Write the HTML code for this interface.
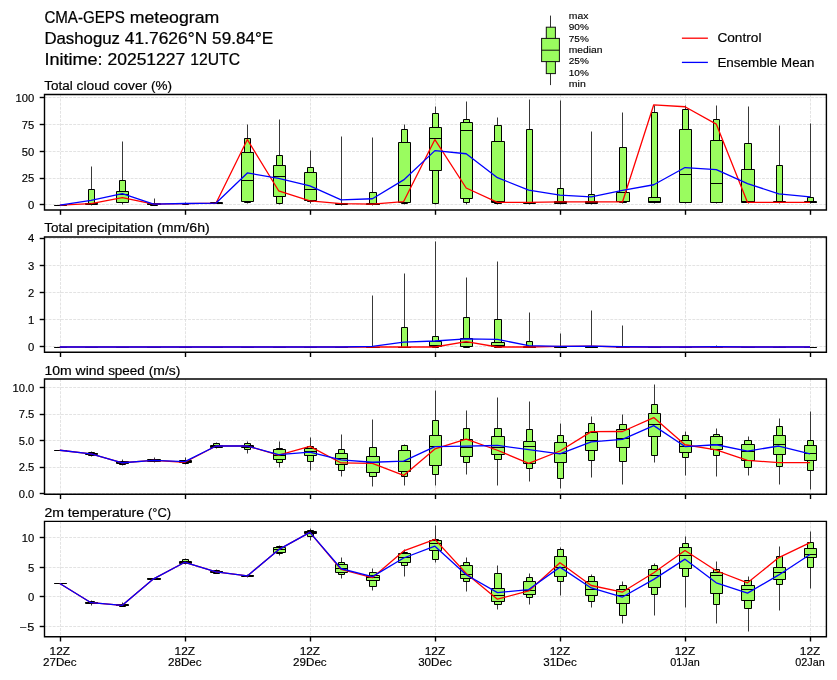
<!DOCTYPE html><html><head><meta charset="utf-8"><style>html,body{margin:0;padding:0;background:#fff;}svg{display:block;will-change:transform;}</style></head><body>
<svg width="837" height="680" viewBox="0 0 837 680" font-family='"Liberation Sans", sans-serif'>
<rect width="837" height="680" fill="#fff"/>
<text x="44.40" y="22.80" font-size="15.76" textLength="80.54" lengthAdjust="spacingAndGlyphs" fill="#000" stroke="#000" stroke-width="0.230">CMA-GEPS</text><text x="129.82" y="22.80" font-size="15.76" textLength="89.39" lengthAdjust="spacingAndGlyphs" fill="#000" stroke="#000" stroke-width="0.230">meteogram</text>
<text x="44.40" y="43.80" font-size="15.76" textLength="75.63" lengthAdjust="spacingAndGlyphs" fill="#000" stroke="#000" stroke-width="0.230">Dashoguz</text><text x="124.89" y="43.80" font-size="15.76" textLength="82.34" lengthAdjust="spacingAndGlyphs" fill="#000" stroke="#000" stroke-width="0.230">41.7626°N</text><text x="212.12" y="43.80" font-size="15.76" textLength="61.11" lengthAdjust="spacingAndGlyphs" fill="#000" stroke="#000" stroke-width="0.230">59.84°E</text>
<text x="44.40" y="64.70" font-size="15.76" textLength="58.19" lengthAdjust="spacingAndGlyphs" fill="#000" stroke="#000" stroke-width="0.230">Initime:</text><text x="107.45" y="64.70" font-size="15.76" textLength="77.87" lengthAdjust="spacingAndGlyphs" fill="#000" stroke="#000" stroke-width="0.230">20251227</text><text x="190.19" y="64.70" font-size="15.76" textLength="49.80" lengthAdjust="spacingAndGlyphs" fill="#000" stroke="#000" stroke-width="0.230">12UTC</text>
<line x1="550.5" y1="15.6" x2="550.5" y2="85.1" stroke="#333" stroke-width="1"/>
<rect x="546.3" y="27.2" width="9.1" height="46.4" fill="#9afc5f" stroke="#111" stroke-width="1"/>
<rect x="541.6" y="38.4" width="17.8" height="23.2" fill="#9afc5f" stroke="#111" stroke-width="1"/>
<line x1="541.6" y1="50.2" x2="559.4" y2="50.2" stroke="#111" stroke-width="1"/>
<text x="568.80" y="18.60" font-size="9.27" textLength="19.61" lengthAdjust="spacingAndGlyphs" fill="#000" stroke="#000" stroke-width="0.135">max</text>
<text x="568.80" y="30.20" font-size="9.27" textLength="19.99" lengthAdjust="spacingAndGlyphs" fill="#000" stroke="#000" stroke-width="0.135">90%</text>
<text x="568.80" y="41.70" font-size="9.27" textLength="19.99" lengthAdjust="spacingAndGlyphs" fill="#000" stroke="#000" stroke-width="0.135">75%</text>
<text x="568.80" y="53.00" font-size="9.27" textLength="33.73" lengthAdjust="spacingAndGlyphs" fill="#000" stroke="#000" stroke-width="0.135">median</text>
<text x="568.80" y="64.00" font-size="9.27" textLength="19.99" lengthAdjust="spacingAndGlyphs" fill="#000" stroke="#000" stroke-width="0.135">25%</text>
<text x="568.80" y="75.50" font-size="9.27" textLength="19.99" lengthAdjust="spacingAndGlyphs" fill="#000" stroke="#000" stroke-width="0.135">10%</text>
<text x="568.80" y="86.80" font-size="9.27" textLength="16.95" lengthAdjust="spacingAndGlyphs" fill="#000" stroke="#000" stroke-width="0.135">min</text>
<line x1="681.9" y1="38.2" x2="707.9" y2="38.2" stroke="#ff0000" stroke-width="1.3"/>
<line x1="681.9" y1="62.4" x2="707.9" y2="62.4" stroke="#0000ff" stroke-width="1.3"/>
<text x="717.40" y="42.40" font-size="12.57" textLength="44.09" lengthAdjust="spacingAndGlyphs" fill="#000" stroke="#000" stroke-width="0.183">Control</text>
<text x="717.40" y="66.80" font-size="12.57" textLength="59.83" lengthAdjust="spacingAndGlyphs" fill="#000" stroke="#000" stroke-width="0.183">Ensemble</text><text x="781.11" y="66.80" font-size="12.57" textLength="33.23" lengthAdjust="spacingAndGlyphs" fill="#000" stroke="#000" stroke-width="0.183">Mean</text>
<defs><clipPath id="clip0"><rect x="44.5" y="94.5" width="781.9" height="115.5"/></clipPath></defs>
<line x1="60.50" y1="94.5" x2="60.50" y2="210.0" stroke="#dcdcdc" stroke-width="0.8" stroke-dasharray="2.9 1.2"/>
<line x1="185.50" y1="94.5" x2="185.50" y2="210.0" stroke="#dcdcdc" stroke-width="0.8" stroke-dasharray="2.9 1.2"/>
<line x1="310.50" y1="94.5" x2="310.50" y2="210.0" stroke="#dcdcdc" stroke-width="0.8" stroke-dasharray="2.9 1.2"/>
<line x1="435.50" y1="94.5" x2="435.50" y2="210.0" stroke="#dcdcdc" stroke-width="0.8" stroke-dasharray="2.9 1.2"/>
<line x1="560.50" y1="94.5" x2="560.50" y2="210.0" stroke="#dcdcdc" stroke-width="0.8" stroke-dasharray="2.9 1.2"/>
<line x1="685.50" y1="94.5" x2="685.50" y2="210.0" stroke="#dcdcdc" stroke-width="0.8" stroke-dasharray="2.9 1.2"/>
<line x1="810.50" y1="94.5" x2="810.50" y2="210.0" stroke="#dcdcdc" stroke-width="0.8" stroke-dasharray="2.9 1.2"/>
<line x1="44.5" y1="204.50" x2="826.4" y2="204.50" stroke="#dcdcdc" stroke-width="0.8" stroke-dasharray="2.9 1.2"/>
<line x1="44.5" y1="178.50" x2="826.4" y2="178.50" stroke="#dcdcdc" stroke-width="0.8" stroke-dasharray="2.9 1.2"/>
<line x1="44.5" y1="151.50" x2="826.4" y2="151.50" stroke="#dcdcdc" stroke-width="0.8" stroke-dasharray="2.9 1.2"/>
<line x1="44.5" y1="124.50" x2="826.4" y2="124.50" stroke="#dcdcdc" stroke-width="0.8" stroke-dasharray="2.9 1.2"/>
<line x1="44.5" y1="97.50" x2="826.4" y2="97.50" stroke="#dcdcdc" stroke-width="0.8" stroke-dasharray="2.9 1.2"/>
<g clip-path="url(#clip0)">
<path d="M60.5 205.5V205.5" stroke="#383838" stroke-width="1.0"/>
<path d="M57.5 205.5H63.5V205.5H57.5Z" fill="#9afc5f" stroke="#000" stroke-width="1.0"/>
<path d="M54.5 205.5H66.5V205.5H54.5Z" fill="#9afc5f" stroke="#000" stroke-width="1.0"/>
<path d="M54.5 205.5H66.5" stroke="#000" stroke-width="1.0"/>
<path d="M91.5 166.5V205.5" stroke="#383838" stroke-width="1.0"/>
<path d="M88.5 189.5H94.5V204.5H88.5Z" fill="#9afc5f" stroke="#000" stroke-width="1.0"/>
<path d="M85.5 203.5H97.5V204.5H85.5Z" fill="#9afc5f" stroke="#000" stroke-width="1.0"/>
<path d="M85.5 203.5H97.5" stroke="#000" stroke-width="1.0"/>
<path d="M122.5 141.5V204.5" stroke="#383838" stroke-width="1.0"/>
<path d="M119.5 180.5H125.5V202.5H119.5Z" fill="#9afc5f" stroke="#000" stroke-width="1.0"/>
<path d="M116.5 191.5H128.5V202.5H116.5Z" fill="#9afc5f" stroke="#000" stroke-width="1.0"/>
<path d="M116.5 194.5H128.5" stroke="#000" stroke-width="1.0"/>
<path d="M154.5 198.5V205.5" stroke="#383838" stroke-width="1.0"/>
<path d="M150.5 203.5H157.5V205.5H150.5Z" fill="#9afc5f" stroke="#000" stroke-width="1.0"/>
<path d="M147.5 203.5H160.5V204.5H147.5Z" fill="#9afc5f" stroke="#000" stroke-width="1.0"/>
<path d="M147.5 204.5H160.5" stroke="#000" stroke-width="1.0"/>
<path d="M185.5 202.5V204.5" stroke="#383838" stroke-width="1.0"/>
<path d="M182.5 203.5H188.5V204.5H182.5Z" fill="#9afc5f" stroke="#000" stroke-width="1.0"/>
<path d="M179.5 203.5H191.5V203.5H179.5Z" fill="#9afc5f" stroke="#000" stroke-width="1.0"/>
<path d="M179.5 203.5H191.5" stroke="#000" stroke-width="1.0"/>
<path d="M216.5 202.5V203.5" stroke="#383838" stroke-width="1.0"/>
<path d="M213.5 202.5H219.5V203.5H213.5Z" fill="#9afc5f" stroke="#000" stroke-width="1.0"/>
<path d="M210.5 202.5H222.5V203.5H210.5Z" fill="#9afc5f" stroke="#000" stroke-width="1.0"/>
<path d="M210.5 203.5H222.5" stroke="#000" stroke-width="1.0"/>
<path d="M247.5 124.5V203.5" stroke="#383838" stroke-width="1.0"/>
<path d="M244.5 138.5H250.5V202.5H244.5Z" fill="#9afc5f" stroke="#000" stroke-width="1.0"/>
<path d="M241.5 152.5H253.5V201.5H241.5Z" fill="#9afc5f" stroke="#000" stroke-width="1.0"/>
<path d="M241.5 180.5H253.5" stroke="#000" stroke-width="1.0"/>
<path d="M279.5 119.5V204.5" stroke="#383838" stroke-width="1.0"/>
<path d="M276.5 155.5H282.5V203.5H276.5Z" fill="#9afc5f" stroke="#000" stroke-width="1.0"/>
<path d="M273.5 165.5H285.5V196.5H273.5Z" fill="#9afc5f" stroke="#000" stroke-width="1.0"/>
<path d="M273.5 176.5H285.5" stroke="#000" stroke-width="1.0"/>
<path d="M310.5 150.5V203.5" stroke="#383838" stroke-width="1.0"/>
<path d="M307.5 167.5H313.5V201.5H307.5Z" fill="#9afc5f" stroke="#000" stroke-width="1.0"/>
<path d="M304.5 172.5H316.5V200.5H304.5Z" fill="#9afc5f" stroke="#000" stroke-width="1.0"/>
<path d="M304.5 189.5H316.5" stroke="#000" stroke-width="1.0"/>
<path d="M341.5 136.5V205.5" stroke="#383838" stroke-width="1.0"/>
<path d="M338.5 203.5H344.5V204.5H338.5Z" fill="#9afc5f" stroke="#000" stroke-width="1.0"/>
<path d="M335.5 203.5H347.5V204.5H335.5Z" fill="#9afc5f" stroke="#000" stroke-width="1.0"/>
<path d="M335.5 203.5H347.5" stroke="#000" stroke-width="1.0"/>
<path d="M372.5 137.5V205.5" stroke="#383838" stroke-width="1.0"/>
<path d="M369.5 192.5H376.5V204.5H369.5Z" fill="#9afc5f" stroke="#000" stroke-width="1.0"/>
<path d="M366.5 203.5H379.5V204.5H366.5Z" fill="#9afc5f" stroke="#000" stroke-width="1.0"/>
<path d="M366.5 204.5H379.5" stroke="#000" stroke-width="1.0"/>
<path d="M404.5 124.5V204.5" stroke="#383838" stroke-width="1.0"/>
<path d="M401.5 129.5H407.5V203.5H401.5Z" fill="#9afc5f" stroke="#000" stroke-width="1.0"/>
<path d="M398.5 142.5H410.5V202.5H398.5Z" fill="#9afc5f" stroke="#000" stroke-width="1.0"/>
<path d="M398.5 185.5H410.5" stroke="#000" stroke-width="1.0"/>
<path d="M435.5 106.5V204.5" stroke="#383838" stroke-width="1.0"/>
<path d="M432.5 113.5H438.5V203.5H432.5Z" fill="#9afc5f" stroke="#000" stroke-width="1.0"/>
<path d="M429.5 127.5H441.5V170.5H429.5Z" fill="#9afc5f" stroke="#000" stroke-width="1.0"/>
<path d="M429.5 138.5H441.5" stroke="#000" stroke-width="1.0"/>
<path d="M466.5 101.5V204.5" stroke="#383838" stroke-width="1.0"/>
<path d="M463.5 119.5H469.5V202.5H463.5Z" fill="#9afc5f" stroke="#000" stroke-width="1.0"/>
<path d="M460.5 122.5H472.5V198.5H460.5Z" fill="#9afc5f" stroke="#000" stroke-width="1.0"/>
<path d="M460.5 130.5H472.5" stroke="#000" stroke-width="1.0"/>
<path d="M497.5 117.5V204.5" stroke="#383838" stroke-width="1.0"/>
<path d="M494.5 125.5H501.5V203.5H494.5Z" fill="#9afc5f" stroke="#000" stroke-width="1.0"/>
<path d="M491.5 141.5H504.5V202.5H491.5Z" fill="#9afc5f" stroke="#000" stroke-width="1.0"/>
<path d="M491.5 201.5H504.5" stroke="#000" stroke-width="1.0"/>
<path d="M529.5 99.5V204.5" stroke="#383838" stroke-width="1.0"/>
<path d="M526.5 129.5H532.5V203.5H526.5Z" fill="#9afc5f" stroke="#000" stroke-width="1.0"/>
<path d="M523.5 202.5H535.5V203.5H523.5Z" fill="#9afc5f" stroke="#000" stroke-width="1.0"/>
<path d="M523.5 202.5H535.5" stroke="#000" stroke-width="1.0"/>
<path d="M560.5 100.5V204.5" stroke="#383838" stroke-width="1.0"/>
<path d="M557.5 188.5H563.5V203.5H557.5Z" fill="#9afc5f" stroke="#000" stroke-width="1.0"/>
<path d="M554.5 201.5H566.5V203.5H554.5Z" fill="#9afc5f" stroke="#000" stroke-width="1.0"/>
<path d="M554.5 202.5H566.5" stroke="#000" stroke-width="1.0"/>
<path d="M591.5 131.5V204.5" stroke="#383838" stroke-width="1.0"/>
<path d="M588.5 194.5H594.5V203.5H588.5Z" fill="#9afc5f" stroke="#000" stroke-width="1.0"/>
<path d="M585.5 201.5H597.5V203.5H585.5Z" fill="#9afc5f" stroke="#000" stroke-width="1.0"/>
<path d="M585.5 202.5H597.5" stroke="#000" stroke-width="1.0"/>
<path d="M622.5 112.5V203.5" stroke="#383838" stroke-width="1.0"/>
<path d="M619.5 147.5H626.5V202.5H619.5Z" fill="#9afc5f" stroke="#000" stroke-width="1.0"/>
<path d="M616.5 192.5H629.5V201.5H616.5Z" fill="#9afc5f" stroke="#000" stroke-width="1.0"/>
<path d="M616.5 201.5H629.5" stroke="#000" stroke-width="1.0"/>
<path d="M654.5 105.5V203.5" stroke="#383838" stroke-width="1.0"/>
<path d="M651.5 112.5H657.5V202.5H651.5Z" fill="#9afc5f" stroke="#000" stroke-width="1.0"/>
<path d="M648.5 197.5H660.5V202.5H648.5Z" fill="#9afc5f" stroke="#000" stroke-width="1.0"/>
<path d="M648.5 201.5H660.5" stroke="#000" stroke-width="1.0"/>
<path d="M685.5 105.5V203.5" stroke="#383838" stroke-width="1.0"/>
<path d="M682.5 109.5H688.5V202.5H682.5Z" fill="#9afc5f" stroke="#000" stroke-width="1.0"/>
<path d="M679.5 129.5H691.5V202.5H679.5Z" fill="#9afc5f" stroke="#000" stroke-width="1.0"/>
<path d="M679.5 174.5H691.5" stroke="#000" stroke-width="1.0"/>
<path d="M716.5 105.5V203.5" stroke="#383838" stroke-width="1.0"/>
<path d="M713.5 119.5H719.5V202.5H713.5Z" fill="#9afc5f" stroke="#000" stroke-width="1.0"/>
<path d="M710.5 140.5H722.5V202.5H710.5Z" fill="#9afc5f" stroke="#000" stroke-width="1.0"/>
<path d="M710.5 183.5H722.5" stroke="#000" stroke-width="1.0"/>
<path d="M748.5 106.5V203.5" stroke="#383838" stroke-width="1.0"/>
<path d="M744.5 143.5H751.5V202.5H744.5Z" fill="#9afc5f" stroke="#000" stroke-width="1.0"/>
<path d="M741.5 169.5H754.5V202.5H741.5Z" fill="#9afc5f" stroke="#000" stroke-width="1.0"/>
<path d="M741.5 201.5H754.5" stroke="#000" stroke-width="1.0"/>
<path d="M779.5 125.5V203.5" stroke="#383838" stroke-width="1.0"/>
<path d="M776.5 165.5H782.5V202.5H776.5Z" fill="#9afc5f" stroke="#000" stroke-width="1.0"/>
<path d="M773.5 201.5H785.5V202.5H773.5Z" fill="#9afc5f" stroke="#000" stroke-width="1.0"/>
<path d="M773.5 202.5H785.5" stroke="#000" stroke-width="1.0"/>
<path d="M810.5 123.5V203.5" stroke="#383838" stroke-width="1.0"/>
<path d="M807.5 197.5H813.5V202.5H807.5Z" fill="#9afc5f" stroke="#000" stroke-width="1.0"/>
<path d="M804.5 201.5H816.5V202.5H804.5Z" fill="#9afc5f" stroke="#000" stroke-width="1.0"/>
<path d="M804.5 202.5H816.5" stroke="#000" stroke-width="1.0"/>
<polyline points="59.80,205.20 91.06,203.59 122.32,197.67 153.58,204.12 184.84,203.59 216.10,203.05 247.36,139.56 278.62,190.78 309.88,200.90 341.14,203.59 372.40,204.12 403.66,201.54 434.92,139.56 466.18,187.98 497.44,202.29 528.70,202.29 559.96,201.97 591.22,201.97 622.48,201.97 653.74,104.81 685.00,106.75 716.26,124.07 747.52,202.40 778.78,202.40 810.04,202.40" fill="none" stroke="#ff0000" stroke-width="1.3" stroke-linejoin="round"/>
<polyline points="59.80,205.20 91.06,200.36 122.32,193.58 153.58,204.12 184.84,203.48 216.10,203.05 247.36,172.92 278.62,178.30 309.88,185.83 341.14,199.82 372.40,198.74 403.66,179.91 434.92,150.65 466.18,153.77 497.44,177.65 528.70,190.14 559.96,195.09 591.22,196.81 622.48,190.35 653.74,184.76 685.00,167.54 716.26,169.69 747.52,183.68 778.78,193.79 810.04,196.81" fill="none" stroke="#0000ff" stroke-width="1.3" stroke-linejoin="round"/>
</g>
<path d="M44.5 94.5H826.4V210.0H44.5Z" fill="none" stroke="#000" stroke-width="1.4"/>
<path d="M39.7 204.5H44.5" stroke="#000" stroke-width="1.4"/>
<text x="28.06" y="208.90" font-size="10.09" textLength="6.26" lengthAdjust="spacingAndGlyphs" fill="#000" stroke="#000" stroke-width="0.147">0</text>
<path d="M39.7 178.5H44.5" stroke="#000" stroke-width="1.4"/>
<text x="21.83" y="182.20" font-size="10.09" textLength="12.47" lengthAdjust="spacingAndGlyphs" fill="#000" stroke="#000" stroke-width="0.147">25</text>
<path d="M39.7 151.5H44.5" stroke="#000" stroke-width="1.4"/>
<text x="21.83" y="155.50" font-size="10.09" textLength="12.47" lengthAdjust="spacingAndGlyphs" fill="#000" stroke="#000" stroke-width="0.147">50</text>
<path d="M39.7 124.5H44.5" stroke="#000" stroke-width="1.4"/>
<text x="21.83" y="128.80" font-size="10.09" textLength="12.47" lengthAdjust="spacingAndGlyphs" fill="#000" stroke="#000" stroke-width="0.147">75</text>
<path d="M39.7 97.5H44.5" stroke="#000" stroke-width="1.4"/>
<text x="15.59" y="102.10" font-size="10.09" textLength="18.73" lengthAdjust="spacingAndGlyphs" fill="#000" stroke="#000" stroke-width="0.147">100</text>
<path d="M60.5 210.0V214.8" stroke="#000" stroke-width="1.4"/>
<path d="M185.5 210.0V214.8" stroke="#000" stroke-width="1.4"/>
<path d="M310.5 210.0V214.8" stroke="#000" stroke-width="1.4"/>
<path d="M435.5 210.0V214.8" stroke="#000" stroke-width="1.4"/>
<path d="M560.5 210.0V214.8" stroke="#000" stroke-width="1.4"/>
<path d="M685.5 210.0V214.8" stroke="#000" stroke-width="1.4"/>
<path d="M810.5 210.0V214.8" stroke="#000" stroke-width="1.4"/>
<text x="44.34" y="89.80" font-size="12.51" textLength="28.43" lengthAdjust="spacingAndGlyphs" fill="#000" stroke="#000" stroke-width="0.182">Total</text><text x="76.64" y="89.80" font-size="12.51" textLength="32.91" lengthAdjust="spacingAndGlyphs" fill="#000" stroke="#000" stroke-width="0.182">cloud</text><text x="113.40" y="89.80" font-size="12.51" textLength="33.78" lengthAdjust="spacingAndGlyphs" fill="#000" stroke="#000" stroke-width="0.182">cover</text><text x="151.04" y="89.80" font-size="12.51" textLength="21.02" lengthAdjust="spacingAndGlyphs" fill="#000" stroke="#000" stroke-width="0.182">(%)</text>
<defs><clipPath id="clip1"><rect x="44.5" y="236.95" width="781.9" height="115.25"/></clipPath></defs>
<line x1="60.50" y1="236.95" x2="60.50" y2="352.2" stroke="#dcdcdc" stroke-width="0.8" stroke-dasharray="2.9 1.2"/>
<line x1="185.50" y1="236.95" x2="185.50" y2="352.2" stroke="#dcdcdc" stroke-width="0.8" stroke-dasharray="2.9 1.2"/>
<line x1="310.50" y1="236.95" x2="310.50" y2="352.2" stroke="#dcdcdc" stroke-width="0.8" stroke-dasharray="2.9 1.2"/>
<line x1="435.50" y1="236.95" x2="435.50" y2="352.2" stroke="#dcdcdc" stroke-width="0.8" stroke-dasharray="2.9 1.2"/>
<line x1="560.50" y1="236.95" x2="560.50" y2="352.2" stroke="#dcdcdc" stroke-width="0.8" stroke-dasharray="2.9 1.2"/>
<line x1="685.50" y1="236.95" x2="685.50" y2="352.2" stroke="#dcdcdc" stroke-width="0.8" stroke-dasharray="2.9 1.2"/>
<line x1="810.50" y1="236.95" x2="810.50" y2="352.2" stroke="#dcdcdc" stroke-width="0.8" stroke-dasharray="2.9 1.2"/>
<line x1="44.5" y1="346.50" x2="826.4" y2="346.50" stroke="#dcdcdc" stroke-width="0.8" stroke-dasharray="2.9 1.2"/>
<line x1="44.5" y1="319.50" x2="826.4" y2="319.50" stroke="#dcdcdc" stroke-width="0.8" stroke-dasharray="2.9 1.2"/>
<line x1="44.5" y1="292.50" x2="826.4" y2="292.50" stroke="#dcdcdc" stroke-width="0.8" stroke-dasharray="2.9 1.2"/>
<line x1="44.5" y1="265.50" x2="826.4" y2="265.50" stroke="#dcdcdc" stroke-width="0.8" stroke-dasharray="2.9 1.2"/>
<line x1="44.5" y1="238.50" x2="826.4" y2="238.50" stroke="#dcdcdc" stroke-width="0.8" stroke-dasharray="2.9 1.2"/>
<g clip-path="url(#clip1)">
<path d="M60.5 347.5V347.5" stroke="#383838" stroke-width="1.0"/>
<path d="M57.5 347.5H63.5V347.5H57.5Z" fill="#9afc5f" stroke="#000" stroke-width="1.0"/>
<path d="M54.5 347.5H66.5V347.5H54.5Z" fill="#9afc5f" stroke="#000" stroke-width="1.0"/>
<path d="M54.5 347.5H66.5" stroke="#000" stroke-width="1.0"/>
<path d="M91.5 347.5V347.5" stroke="#383838" stroke-width="1.0"/>
<path d="M88.5 347.5H94.5V347.5H88.5Z" fill="#9afc5f" stroke="#000" stroke-width="1.0"/>
<path d="M85.5 347.5H97.5V347.5H85.5Z" fill="#9afc5f" stroke="#000" stroke-width="1.0"/>
<path d="M85.5 347.5H97.5" stroke="#000" stroke-width="1.0"/>
<path d="M122.5 347.5V347.5" stroke="#383838" stroke-width="1.0"/>
<path d="M119.5 347.5H125.5V347.5H119.5Z" fill="#9afc5f" stroke="#000" stroke-width="1.0"/>
<path d="M116.5 347.5H128.5V347.5H116.5Z" fill="#9afc5f" stroke="#000" stroke-width="1.0"/>
<path d="M116.5 347.5H128.5" stroke="#000" stroke-width="1.0"/>
<path d="M154.5 347.5V347.5" stroke="#383838" stroke-width="1.0"/>
<path d="M150.5 347.5H157.5V347.5H150.5Z" fill="#9afc5f" stroke="#000" stroke-width="1.0"/>
<path d="M147.5 347.5H160.5V347.5H147.5Z" fill="#9afc5f" stroke="#000" stroke-width="1.0"/>
<path d="M147.5 347.5H160.5" stroke="#000" stroke-width="1.0"/>
<path d="M185.5 347.5V347.5" stroke="#383838" stroke-width="1.0"/>
<path d="M182.5 347.5H188.5V347.5H182.5Z" fill="#9afc5f" stroke="#000" stroke-width="1.0"/>
<path d="M179.5 347.5H191.5V347.5H179.5Z" fill="#9afc5f" stroke="#000" stroke-width="1.0"/>
<path d="M179.5 347.5H191.5" stroke="#000" stroke-width="1.0"/>
<path d="M216.5 347.5V347.5" stroke="#383838" stroke-width="1.0"/>
<path d="M213.5 347.5H219.5V347.5H213.5Z" fill="#9afc5f" stroke="#000" stroke-width="1.0"/>
<path d="M210.5 347.5H222.5V347.5H210.5Z" fill="#9afc5f" stroke="#000" stroke-width="1.0"/>
<path d="M210.5 347.5H222.5" stroke="#000" stroke-width="1.0"/>
<path d="M247.5 347.5V347.5" stroke="#383838" stroke-width="1.0"/>
<path d="M244.5 347.5H250.5V347.5H244.5Z" fill="#9afc5f" stroke="#000" stroke-width="1.0"/>
<path d="M241.5 347.5H253.5V347.5H241.5Z" fill="#9afc5f" stroke="#000" stroke-width="1.0"/>
<path d="M241.5 347.5H253.5" stroke="#000" stroke-width="1.0"/>
<path d="M279.5 347.5V347.5" stroke="#383838" stroke-width="1.0"/>
<path d="M276.5 347.5H282.5V347.5H276.5Z" fill="#9afc5f" stroke="#000" stroke-width="1.0"/>
<path d="M273.5 347.5H285.5V347.5H273.5Z" fill="#9afc5f" stroke="#000" stroke-width="1.0"/>
<path d="M273.5 347.5H285.5" stroke="#000" stroke-width="1.0"/>
<path d="M310.5 347.5V347.5" stroke="#383838" stroke-width="1.0"/>
<path d="M307.5 347.5H313.5V347.5H307.5Z" fill="#9afc5f" stroke="#000" stroke-width="1.0"/>
<path d="M304.5 347.5H316.5V347.5H304.5Z" fill="#9afc5f" stroke="#000" stroke-width="1.0"/>
<path d="M304.5 347.5H316.5" stroke="#000" stroke-width="1.0"/>
<path d="M341.5 347.5V347.5" stroke="#383838" stroke-width="1.0"/>
<path d="M338.5 347.5H344.5V347.5H338.5Z" fill="#9afc5f" stroke="#000" stroke-width="1.0"/>
<path d="M335.5 347.5H347.5V347.5H335.5Z" fill="#9afc5f" stroke="#000" stroke-width="1.0"/>
<path d="M335.5 347.5H347.5" stroke="#000" stroke-width="1.0"/>
<path d="M372.5 295.5V347.5" stroke="#383838" stroke-width="1.0"/>
<path d="M369.5 347.5H376.5V347.5H369.5Z" fill="#9afc5f" stroke="#000" stroke-width="1.0"/>
<path d="M366.5 347.5H379.5V347.5H366.5Z" fill="#9afc5f" stroke="#000" stroke-width="1.0"/>
<path d="M366.5 347.5H379.5" stroke="#000" stroke-width="1.0"/>
<path d="M404.5 273.5V347.5" stroke="#383838" stroke-width="1.0"/>
<path d="M401.5 327.5H407.5V347.5H401.5Z" fill="#9afc5f" stroke="#000" stroke-width="1.0"/>
<path d="M398.5 347.5H410.5V347.5H398.5Z" fill="#9afc5f" stroke="#000" stroke-width="1.0"/>
<path d="M398.5 347.5H410.5" stroke="#000" stroke-width="1.0"/>
<path d="M435.5 241.5V347.5" stroke="#383838" stroke-width="1.0"/>
<path d="M432.5 336.5H438.5V347.5H432.5Z" fill="#9afc5f" stroke="#000" stroke-width="1.0"/>
<path d="M429.5 341.5H441.5V346.5H429.5Z" fill="#9afc5f" stroke="#000" stroke-width="1.0"/>
<path d="M429.5 345.5H441.5" stroke="#000" stroke-width="1.0"/>
<path d="M466.5 277.5V347.5" stroke="#383838" stroke-width="1.0"/>
<path d="M463.5 317.5H469.5V347.5H463.5Z" fill="#9afc5f" stroke="#000" stroke-width="1.0"/>
<path d="M460.5 338.5H472.5V346.5H460.5Z" fill="#9afc5f" stroke="#000" stroke-width="1.0"/>
<path d="M460.5 342.5H472.5" stroke="#000" stroke-width="1.0"/>
<path d="M497.5 261.5V347.5" stroke="#383838" stroke-width="1.0"/>
<path d="M494.5 319.5H501.5V347.5H494.5Z" fill="#9afc5f" stroke="#000" stroke-width="1.0"/>
<path d="M491.5 342.5H504.5V346.5H491.5Z" fill="#9afc5f" stroke="#000" stroke-width="1.0"/>
<path d="M491.5 345.5H504.5" stroke="#000" stroke-width="1.0"/>
<path d="M529.5 312.5V347.5" stroke="#383838" stroke-width="1.0"/>
<path d="M526.5 341.5H532.5V347.5H526.5Z" fill="#9afc5f" stroke="#000" stroke-width="1.0"/>
<path d="M523.5 346.5H535.5V347.5H523.5Z" fill="#9afc5f" stroke="#000" stroke-width="1.0"/>
<path d="M523.5 347.5H535.5" stroke="#000" stroke-width="1.0"/>
<path d="M560.5 333.5V347.5" stroke="#383838" stroke-width="1.0"/>
<path d="M557.5 346.5H563.5V347.5H557.5Z" fill="#9afc5f" stroke="#000" stroke-width="1.0"/>
<path d="M554.5 347.5H566.5V347.5H554.5Z" fill="#9afc5f" stroke="#000" stroke-width="1.0"/>
<path d="M554.5 347.5H566.5" stroke="#000" stroke-width="1.0"/>
<path d="M591.5 310.5V347.5" stroke="#383838" stroke-width="1.0"/>
<path d="M588.5 347.5H594.5V347.5H588.5Z" fill="#9afc5f" stroke="#000" stroke-width="1.0"/>
<path d="M585.5 347.5H597.5V347.5H585.5Z" fill="#9afc5f" stroke="#000" stroke-width="1.0"/>
<path d="M585.5 347.5H597.5" stroke="#000" stroke-width="1.0"/>
<path d="M622.5 325.5V347.5" stroke="#383838" stroke-width="1.0"/>
<path d="M619.5 347.5H626.5V347.5H619.5Z" fill="#9afc5f" stroke="#000" stroke-width="1.0"/>
<path d="M616.5 347.5H629.5V347.5H616.5Z" fill="#9afc5f" stroke="#000" stroke-width="1.0"/>
<path d="M616.5 347.5H629.5" stroke="#000" stroke-width="1.0"/>
<path d="M654.5 347.5V347.5" stroke="#383838" stroke-width="1.0"/>
<path d="M651.5 347.5H657.5V347.5H651.5Z" fill="#9afc5f" stroke="#000" stroke-width="1.0"/>
<path d="M648.5 347.5H660.5V347.5H648.5Z" fill="#9afc5f" stroke="#000" stroke-width="1.0"/>
<path d="M648.5 347.5H660.5" stroke="#000" stroke-width="1.0"/>
<path d="M685.5 347.5V347.5" stroke="#383838" stroke-width="1.0"/>
<path d="M682.5 347.5H688.5V347.5H682.5Z" fill="#9afc5f" stroke="#000" stroke-width="1.0"/>
<path d="M679.5 347.5H691.5V347.5H679.5Z" fill="#9afc5f" stroke="#000" stroke-width="1.0"/>
<path d="M679.5 347.5H691.5" stroke="#000" stroke-width="1.0"/>
<path d="M716.5 345.5V347.5" stroke="#383838" stroke-width="1.0"/>
<path d="M713.5 347.5H719.5V347.5H713.5Z" fill="#9afc5f" stroke="#000" stroke-width="1.0"/>
<path d="M710.5 347.5H722.5V347.5H710.5Z" fill="#9afc5f" stroke="#000" stroke-width="1.0"/>
<path d="M710.5 347.5H722.5" stroke="#000" stroke-width="1.0"/>
<path d="M748.5 347.5V347.5" stroke="#383838" stroke-width="1.0"/>
<path d="M744.5 347.5H751.5V347.5H744.5Z" fill="#9afc5f" stroke="#000" stroke-width="1.0"/>
<path d="M741.5 347.5H754.5V347.5H741.5Z" fill="#9afc5f" stroke="#000" stroke-width="1.0"/>
<path d="M741.5 347.5H754.5" stroke="#000" stroke-width="1.0"/>
<path d="M779.5 346.5V347.5" stroke="#383838" stroke-width="1.0"/>
<path d="M776.5 347.5H782.5V347.5H776.5Z" fill="#9afc5f" stroke="#000" stroke-width="1.0"/>
<path d="M773.5 347.5H785.5V347.5H773.5Z" fill="#9afc5f" stroke="#000" stroke-width="1.0"/>
<path d="M773.5 347.5H785.5" stroke="#000" stroke-width="1.0"/>
<path d="M810.5 347.5V347.5" stroke="#383838" stroke-width="1.0"/>
<path d="M807.5 347.5H813.5V347.5H807.5Z" fill="#9afc5f" stroke="#000" stroke-width="1.0"/>
<path d="M804.5 347.5H816.5V347.5H804.5Z" fill="#9afc5f" stroke="#000" stroke-width="1.0"/>
<path d="M804.5 347.5H816.5" stroke="#000" stroke-width="1.0"/>
<polyline points="59.80,347.00 91.06,347.00 122.32,347.00 153.58,347.00 184.84,347.00 216.10,347.00 247.36,347.00 278.62,347.00 309.88,347.00 341.14,347.00 372.40,347.00 403.66,347.00 434.92,347.00 466.18,341.56 497.44,347.00 528.70,347.00 559.96,346.46 591.22,346.18 622.48,347.00 653.74,347.00 685.00,347.00 716.26,347.00 747.52,347.00 778.78,347.00 810.04,347.00" fill="none" stroke="#ff0000" stroke-width="1.3" stroke-linejoin="round"/>
<polyline points="59.80,347.00 91.06,347.00 122.32,347.00 153.58,347.00 184.84,347.00 216.10,347.00 247.36,347.00 278.62,347.00 309.88,347.00 341.14,347.00 372.40,346.46 403.66,342.10 434.92,341.02 466.18,338.84 497.44,339.38 528.70,345.64 559.96,346.46 591.22,346.18 622.48,346.73 653.74,347.00 685.00,347.00 716.26,346.73 747.52,347.00 778.78,347.00 810.04,347.00" fill="none" stroke="#0000ff" stroke-width="1.3" stroke-linejoin="round"/>
</g>
<path d="M44.5 236.95H826.4V352.2H44.5Z" fill="none" stroke="#000" stroke-width="1.4"/>
<path d="M39.7 346.5H44.5" stroke="#000" stroke-width="1.4"/>
<text x="28.06" y="351.10" font-size="10.09" textLength="6.26" lengthAdjust="spacingAndGlyphs" fill="#000" stroke="#000" stroke-width="0.147">0</text>
<path d="M39.7 319.5H44.5" stroke="#000" stroke-width="1.4"/>
<text x="28.06" y="323.90" font-size="10.09" textLength="6.26" lengthAdjust="spacingAndGlyphs" fill="#000" stroke="#000" stroke-width="0.147">1</text>
<path d="M39.7 292.5H44.5" stroke="#000" stroke-width="1.4"/>
<text x="28.06" y="296.70" font-size="10.09" textLength="6.26" lengthAdjust="spacingAndGlyphs" fill="#000" stroke="#000" stroke-width="0.147">2</text>
<path d="M39.7 265.5H44.5" stroke="#000" stroke-width="1.4"/>
<text x="28.06" y="269.50" font-size="10.09" textLength="6.26" lengthAdjust="spacingAndGlyphs" fill="#000" stroke="#000" stroke-width="0.147">3</text>
<path d="M39.7 238.5H44.5" stroke="#000" stroke-width="1.4"/>
<text x="28.06" y="242.30" font-size="10.09" textLength="6.26" lengthAdjust="spacingAndGlyphs" fill="#000" stroke="#000" stroke-width="0.147">4</text>
<path d="M60.5 352.2V357.0" stroke="#000" stroke-width="1.4"/>
<path d="M185.5 352.2V357.0" stroke="#000" stroke-width="1.4"/>
<path d="M310.5 352.2V357.0" stroke="#000" stroke-width="1.4"/>
<path d="M435.5 352.2V357.0" stroke="#000" stroke-width="1.4"/>
<path d="M560.5 352.2V357.0" stroke="#000" stroke-width="1.4"/>
<path d="M685.5 352.2V357.0" stroke="#000" stroke-width="1.4"/>
<path d="M810.5 352.2V357.0" stroke="#000" stroke-width="1.4"/>
<text x="44.34" y="231.80" font-size="12.51" textLength="28.43" lengthAdjust="spacingAndGlyphs" fill="#000" stroke="#000" stroke-width="0.182">Total</text><text x="76.64" y="231.80" font-size="12.51" textLength="76.54" lengthAdjust="spacingAndGlyphs" fill="#000" stroke="#000" stroke-width="0.182">precipitation</text><text x="157.05" y="231.80" font-size="12.51" textLength="52.67" lengthAdjust="spacingAndGlyphs" fill="#000" stroke="#000" stroke-width="0.182">(mm/6h)</text>
<defs><clipPath id="clip2"><rect x="44.5" y="378.95" width="781.9" height="115.30000000000001"/></clipPath></defs>
<line x1="60.50" y1="378.95" x2="60.50" y2="494.25" stroke="#dcdcdc" stroke-width="0.8" stroke-dasharray="2.9 1.2"/>
<line x1="185.50" y1="378.95" x2="185.50" y2="494.25" stroke="#dcdcdc" stroke-width="0.8" stroke-dasharray="2.9 1.2"/>
<line x1="310.50" y1="378.95" x2="310.50" y2="494.25" stroke="#dcdcdc" stroke-width="0.8" stroke-dasharray="2.9 1.2"/>
<line x1="435.50" y1="378.95" x2="435.50" y2="494.25" stroke="#dcdcdc" stroke-width="0.8" stroke-dasharray="2.9 1.2"/>
<line x1="560.50" y1="378.95" x2="560.50" y2="494.25" stroke="#dcdcdc" stroke-width="0.8" stroke-dasharray="2.9 1.2"/>
<line x1="685.50" y1="378.95" x2="685.50" y2="494.25" stroke="#dcdcdc" stroke-width="0.8" stroke-dasharray="2.9 1.2"/>
<line x1="810.50" y1="378.95" x2="810.50" y2="494.25" stroke="#dcdcdc" stroke-width="0.8" stroke-dasharray="2.9 1.2"/>
<line x1="44.5" y1="493.50" x2="826.4" y2="493.50" stroke="#dcdcdc" stroke-width="0.8" stroke-dasharray="2.9 1.2"/>
<line x1="44.5" y1="467.50" x2="826.4" y2="467.50" stroke="#dcdcdc" stroke-width="0.8" stroke-dasharray="2.9 1.2"/>
<line x1="44.5" y1="440.50" x2="826.4" y2="440.50" stroke="#dcdcdc" stroke-width="0.8" stroke-dasharray="2.9 1.2"/>
<line x1="44.5" y1="414.50" x2="826.4" y2="414.50" stroke="#dcdcdc" stroke-width="0.8" stroke-dasharray="2.9 1.2"/>
<line x1="44.5" y1="387.50" x2="826.4" y2="387.50" stroke="#dcdcdc" stroke-width="0.8" stroke-dasharray="2.9 1.2"/>
<g clip-path="url(#clip2)">
<path d="M60.5 450.5V450.5" stroke="#383838" stroke-width="1.0"/>
<path d="M57.5 450.5H63.5V450.5H57.5Z" fill="#9afc5f" stroke="#000" stroke-width="1.0"/>
<path d="M54.5 450.5H66.5V450.5H54.5Z" fill="#9afc5f" stroke="#000" stroke-width="1.0"/>
<path d="M54.5 450.5H66.5" stroke="#000" stroke-width="1.0"/>
<path d="M91.5 451.5V456.5" stroke="#383838" stroke-width="1.0"/>
<path d="M88.5 452.5H94.5V455.5H88.5Z" fill="#9afc5f" stroke="#000" stroke-width="1.0"/>
<path d="M85.5 453.5H97.5V454.5H85.5Z" fill="#9afc5f" stroke="#000" stroke-width="1.0"/>
<path d="M85.5 453.5H97.5" stroke="#000" stroke-width="1.0"/>
<path d="M122.5 459.5V465.5" stroke="#383838" stroke-width="1.0"/>
<path d="M119.5 461.5H125.5V464.5H119.5Z" fill="#9afc5f" stroke="#000" stroke-width="1.0"/>
<path d="M116.5 461.5H128.5V463.5H116.5Z" fill="#9afc5f" stroke="#000" stroke-width="1.0"/>
<path d="M116.5 462.5H128.5" stroke="#000" stroke-width="1.0"/>
<path d="M154.5 457.5V462.5" stroke="#383838" stroke-width="1.0"/>
<path d="M150.5 459.5H157.5V461.5H150.5Z" fill="#9afc5f" stroke="#000" stroke-width="1.0"/>
<path d="M147.5 459.5H160.5V461.5H147.5Z" fill="#9afc5f" stroke="#000" stroke-width="1.0"/>
<path d="M147.5 460.5H160.5" stroke="#000" stroke-width="1.0"/>
<path d="M185.5 457.5V464.5" stroke="#383838" stroke-width="1.0"/>
<path d="M182.5 460.5H188.5V463.5H182.5Z" fill="#9afc5f" stroke="#000" stroke-width="1.0"/>
<path d="M179.5 460.5H191.5V462.5H179.5Z" fill="#9afc5f" stroke="#000" stroke-width="1.0"/>
<path d="M179.5 461.5H191.5" stroke="#000" stroke-width="1.0"/>
<path d="M216.5 442.5V448.5" stroke="#383838" stroke-width="1.0"/>
<path d="M213.5 443.5H219.5V447.5H213.5Z" fill="#9afc5f" stroke="#000" stroke-width="1.0"/>
<path d="M210.5 445.5H222.5V447.5H210.5Z" fill="#9afc5f" stroke="#000" stroke-width="1.0"/>
<path d="M210.5 446.5H222.5" stroke="#000" stroke-width="1.0"/>
<path d="M247.5 441.5V453.5" stroke="#383838" stroke-width="1.0"/>
<path d="M244.5 443.5H250.5V449.5H244.5Z" fill="#9afc5f" stroke="#000" stroke-width="1.0"/>
<path d="M241.5 445.5H253.5V447.5H241.5Z" fill="#9afc5f" stroke="#000" stroke-width="1.0"/>
<path d="M241.5 446.5H253.5" stroke="#000" stroke-width="1.0"/>
<path d="M279.5 441.5V467.5" stroke="#383838" stroke-width="1.0"/>
<path d="M276.5 448.5H282.5V462.5H276.5Z" fill="#9afc5f" stroke="#000" stroke-width="1.0"/>
<path d="M273.5 449.5H285.5V459.5H273.5Z" fill="#9afc5f" stroke="#000" stroke-width="1.0"/>
<path d="M273.5 455.5H285.5" stroke="#000" stroke-width="1.0"/>
<path d="M310.5 437.5V470.5" stroke="#383838" stroke-width="1.0"/>
<path d="M307.5 446.5H313.5V461.5H307.5Z" fill="#9afc5f" stroke="#000" stroke-width="1.0"/>
<path d="M304.5 448.5H316.5V455.5H304.5Z" fill="#9afc5f" stroke="#000" stroke-width="1.0"/>
<path d="M304.5 451.5H316.5" stroke="#000" stroke-width="1.0"/>
<path d="M341.5 434.5V476.5" stroke="#383838" stroke-width="1.0"/>
<path d="M338.5 449.5H344.5V470.5H338.5Z" fill="#9afc5f" stroke="#000" stroke-width="1.0"/>
<path d="M335.5 453.5H347.5V464.5H335.5Z" fill="#9afc5f" stroke="#000" stroke-width="1.0"/>
<path d="M335.5 458.5H347.5" stroke="#000" stroke-width="1.0"/>
<path d="M372.5 419.5V486.5" stroke="#383838" stroke-width="1.0"/>
<path d="M369.5 447.5H376.5V476.5H369.5Z" fill="#9afc5f" stroke="#000" stroke-width="1.0"/>
<path d="M366.5 456.5H379.5V472.5H366.5Z" fill="#9afc5f" stroke="#000" stroke-width="1.0"/>
<path d="M366.5 462.5H379.5" stroke="#000" stroke-width="1.0"/>
<path d="M404.5 444.5V485.5" stroke="#383838" stroke-width="1.0"/>
<path d="M401.5 445.5H407.5V476.5H401.5Z" fill="#9afc5f" stroke="#000" stroke-width="1.0"/>
<path d="M398.5 450.5H410.5V471.5H398.5Z" fill="#9afc5f" stroke="#000" stroke-width="1.0"/>
<path d="M398.5 461.5H410.5" stroke="#000" stroke-width="1.0"/>
<path d="M435.5 390.5V485.5" stroke="#383838" stroke-width="1.0"/>
<path d="M432.5 420.5H438.5V474.5H432.5Z" fill="#9afc5f" stroke="#000" stroke-width="1.0"/>
<path d="M429.5 435.5H441.5V465.5H429.5Z" fill="#9afc5f" stroke="#000" stroke-width="1.0"/>
<path d="M429.5 446.5H441.5" stroke="#000" stroke-width="1.0"/>
<path d="M466.5 410.5V474.5" stroke="#383838" stroke-width="1.0"/>
<path d="M463.5 428.5H469.5V462.5H463.5Z" fill="#9afc5f" stroke="#000" stroke-width="1.0"/>
<path d="M460.5 439.5H472.5V456.5H460.5Z" fill="#9afc5f" stroke="#000" stroke-width="1.0"/>
<path d="M460.5 447.5H472.5" stroke="#000" stroke-width="1.0"/>
<path d="M497.5 397.5V485.5" stroke="#383838" stroke-width="1.0"/>
<path d="M494.5 428.5H501.5V459.5H494.5Z" fill="#9afc5f" stroke="#000" stroke-width="1.0"/>
<path d="M491.5 436.5H504.5V454.5H491.5Z" fill="#9afc5f" stroke="#000" stroke-width="1.0"/>
<path d="M491.5 447.5H504.5" stroke="#000" stroke-width="1.0"/>
<path d="M529.5 401.5V481.5" stroke="#383838" stroke-width="1.0"/>
<path d="M526.5 429.5H532.5V468.5H526.5Z" fill="#9afc5f" stroke="#000" stroke-width="1.0"/>
<path d="M523.5 441.5H535.5V463.5H523.5Z" fill="#9afc5f" stroke="#000" stroke-width="1.0"/>
<path d="M523.5 446.5H535.5" stroke="#000" stroke-width="1.0"/>
<path d="M560.5 423.5V488.5" stroke="#383838" stroke-width="1.0"/>
<path d="M557.5 435.5H563.5V478.5H557.5Z" fill="#9afc5f" stroke="#000" stroke-width="1.0"/>
<path d="M554.5 442.5H566.5V462.5H554.5Z" fill="#9afc5f" stroke="#000" stroke-width="1.0"/>
<path d="M554.5 453.5H566.5" stroke="#000" stroke-width="1.0"/>
<path d="M591.5 416.5V477.5" stroke="#383838" stroke-width="1.0"/>
<path d="M588.5 423.5H594.5V460.5H588.5Z" fill="#9afc5f" stroke="#000" stroke-width="1.0"/>
<path d="M585.5 432.5H597.5V450.5H585.5Z" fill="#9afc5f" stroke="#000" stroke-width="1.0"/>
<path d="M585.5 440.5H597.5" stroke="#000" stroke-width="1.0"/>
<path d="M622.5 414.5V484.5" stroke="#383838" stroke-width="1.0"/>
<path d="M619.5 424.5H626.5V461.5H619.5Z" fill="#9afc5f" stroke="#000" stroke-width="1.0"/>
<path d="M616.5 429.5H629.5V447.5H616.5Z" fill="#9afc5f" stroke="#000" stroke-width="1.0"/>
<path d="M616.5 438.5H629.5" stroke="#000" stroke-width="1.0"/>
<path d="M654.5 384.5V462.5" stroke="#383838" stroke-width="1.0"/>
<path d="M651.5 404.5H657.5V455.5H651.5Z" fill="#9afc5f" stroke="#000" stroke-width="1.0"/>
<path d="M648.5 413.5H660.5V436.5H648.5Z" fill="#9afc5f" stroke="#000" stroke-width="1.0"/>
<path d="M648.5 424.5H660.5" stroke="#000" stroke-width="1.0"/>
<path d="M685.5 431.5V475.5" stroke="#383838" stroke-width="1.0"/>
<path d="M682.5 435.5H688.5V457.5H682.5Z" fill="#9afc5f" stroke="#000" stroke-width="1.0"/>
<path d="M679.5 440.5H691.5V452.5H679.5Z" fill="#9afc5f" stroke="#000" stroke-width="1.0"/>
<path d="M679.5 446.5H691.5" stroke="#000" stroke-width="1.0"/>
<path d="M716.5 428.5V476.5" stroke="#383838" stroke-width="1.0"/>
<path d="M713.5 434.5H719.5V455.5H713.5Z" fill="#9afc5f" stroke="#000" stroke-width="1.0"/>
<path d="M710.5 436.5H722.5V449.5H710.5Z" fill="#9afc5f" stroke="#000" stroke-width="1.0"/>
<path d="M710.5 444.5H722.5" stroke="#000" stroke-width="1.0"/>
<path d="M748.5 436.5V475.5" stroke="#383838" stroke-width="1.0"/>
<path d="M744.5 440.5H751.5V467.5H744.5Z" fill="#9afc5f" stroke="#000" stroke-width="1.0"/>
<path d="M741.5 444.5H754.5V460.5H741.5Z" fill="#9afc5f" stroke="#000" stroke-width="1.0"/>
<path d="M741.5 451.5H754.5" stroke="#000" stroke-width="1.0"/>
<path d="M779.5 418.5V484.5" stroke="#383838" stroke-width="1.0"/>
<path d="M776.5 426.5H782.5V466.5H776.5Z" fill="#9afc5f" stroke="#000" stroke-width="1.0"/>
<path d="M773.5 435.5H785.5V454.5H773.5Z" fill="#9afc5f" stroke="#000" stroke-width="1.0"/>
<path d="M773.5 444.5H785.5" stroke="#000" stroke-width="1.0"/>
<path d="M810.5 411.5V489.5" stroke="#383838" stroke-width="1.0"/>
<path d="M807.5 440.5H813.5V470.5H807.5Z" fill="#9afc5f" stroke="#000" stroke-width="1.0"/>
<path d="M804.5 445.5H816.5V460.5H804.5Z" fill="#9afc5f" stroke="#000" stroke-width="1.0"/>
<path d="M804.5 453.5H816.5" stroke="#000" stroke-width="1.0"/>
<polyline points="59.80,450.25 91.06,453.86 122.32,462.76 153.58,460.32 184.84,462.23 216.10,446.01 247.36,446.01 278.62,455.02 309.88,446.33 341.14,462.97 372.40,463.40 403.66,475.48 434.92,448.98 466.18,439.02 497.44,450.25 528.70,463.40 559.96,450.99 591.22,431.60 622.48,431.49 653.74,417.60 685.00,444.74 716.26,449.83 747.52,460.43 778.78,462.55 810.04,462.55" fill="none" stroke="#ff0000" stroke-width="1.3" stroke-linejoin="round"/>
<polyline points="59.80,450.25 91.06,453.86 122.32,462.76 153.58,460.32 184.84,461.70 216.10,446.01 247.36,446.01 278.62,454.60 309.88,452.16 341.14,459.79 372.40,462.23 403.66,461.06 434.92,446.65 466.18,446.22 497.44,445.48 528.70,449.62 559.96,453.86 591.22,441.88 622.48,439.44 653.74,425.66 685.00,446.54 716.26,444.74 747.52,451.10 778.78,446.01 810.04,453.86" fill="none" stroke="#0000ff" stroke-width="1.3" stroke-linejoin="round"/>
</g>
<path d="M44.5 378.95H826.4V494.25H44.5Z" fill="none" stroke="#000" stroke-width="1.4"/>
<path d="M39.7 493.5H44.5" stroke="#000" stroke-width="1.4"/>
<text x="18.71" y="497.80" font-size="10.09" textLength="15.58" lengthAdjust="spacingAndGlyphs" fill="#000" stroke="#000" stroke-width="0.147">0.0</text>
<path d="M39.7 467.5H44.5" stroke="#000" stroke-width="1.4"/>
<text x="18.71" y="471.28" font-size="10.09" textLength="15.58" lengthAdjust="spacingAndGlyphs" fill="#000" stroke="#000" stroke-width="0.147">2.5</text>
<path d="M39.7 440.5H44.5" stroke="#000" stroke-width="1.4"/>
<text x="18.71" y="444.75" font-size="10.09" textLength="15.58" lengthAdjust="spacingAndGlyphs" fill="#000" stroke="#000" stroke-width="0.147">5.0</text>
<path d="M39.7 414.5H44.5" stroke="#000" stroke-width="1.4"/>
<text x="18.71" y="418.23" font-size="10.09" textLength="15.58" lengthAdjust="spacingAndGlyphs" fill="#000" stroke="#000" stroke-width="0.147">7.5</text>
<path d="M39.7 387.5H44.5" stroke="#000" stroke-width="1.4"/>
<text x="12.48" y="391.70" font-size="10.09" textLength="21.82" lengthAdjust="spacingAndGlyphs" fill="#000" stroke="#000" stroke-width="0.147">10.0</text>
<path d="M60.5 494.25V499.05" stroke="#000" stroke-width="1.4"/>
<path d="M185.5 494.25V499.05" stroke="#000" stroke-width="1.4"/>
<path d="M310.5 494.25V499.05" stroke="#000" stroke-width="1.4"/>
<path d="M435.5 494.25V499.05" stroke="#000" stroke-width="1.4"/>
<path d="M560.5 494.25V499.05" stroke="#000" stroke-width="1.4"/>
<path d="M685.5 494.25V499.05" stroke="#000" stroke-width="1.4"/>
<path d="M810.5 494.25V499.05" stroke="#000" stroke-width="1.4"/>
<text x="44.40" y="374.60" font-size="12.51" textLength="27.31" lengthAdjust="spacingAndGlyphs" fill="#000" stroke="#000" stroke-width="0.182">10m</text><text x="75.59" y="374.60" font-size="12.51" textLength="28.69" lengthAdjust="spacingAndGlyphs" fill="#000" stroke="#000" stroke-width="0.182">wind</text><text x="108.15" y="374.60" font-size="12.51" textLength="36.69" lengthAdjust="spacingAndGlyphs" fill="#000" stroke="#000" stroke-width="0.182">speed</text><text x="148.72" y="374.60" font-size="12.51" textLength="31.73" lengthAdjust="spacingAndGlyphs" fill="#000" stroke="#000" stroke-width="0.182">(m/s)</text>
<defs><clipPath id="clip3"><rect x="44.5" y="521.4" width="781.9" height="115.30000000000007"/></clipPath></defs>
<line x1="60.50" y1="521.4" x2="60.50" y2="636.7" stroke="#dcdcdc" stroke-width="0.8" stroke-dasharray="2.9 1.2"/>
<line x1="185.50" y1="521.4" x2="185.50" y2="636.7" stroke="#dcdcdc" stroke-width="0.8" stroke-dasharray="2.9 1.2"/>
<line x1="310.50" y1="521.4" x2="310.50" y2="636.7" stroke="#dcdcdc" stroke-width="0.8" stroke-dasharray="2.9 1.2"/>
<line x1="435.50" y1="521.4" x2="435.50" y2="636.7" stroke="#dcdcdc" stroke-width="0.8" stroke-dasharray="2.9 1.2"/>
<line x1="560.50" y1="521.4" x2="560.50" y2="636.7" stroke="#dcdcdc" stroke-width="0.8" stroke-dasharray="2.9 1.2"/>
<line x1="685.50" y1="521.4" x2="685.50" y2="636.7" stroke="#dcdcdc" stroke-width="0.8" stroke-dasharray="2.9 1.2"/>
<line x1="810.50" y1="521.4" x2="810.50" y2="636.7" stroke="#dcdcdc" stroke-width="0.8" stroke-dasharray="2.9 1.2"/>
<line x1="44.5" y1="626.50" x2="826.4" y2="626.50" stroke="#dcdcdc" stroke-width="0.8" stroke-dasharray="2.9 1.2"/>
<line x1="44.5" y1="596.50" x2="826.4" y2="596.50" stroke="#dcdcdc" stroke-width="0.8" stroke-dasharray="2.9 1.2"/>
<line x1="44.5" y1="567.50" x2="826.4" y2="567.50" stroke="#dcdcdc" stroke-width="0.8" stroke-dasharray="2.9 1.2"/>
<line x1="44.5" y1="537.50" x2="826.4" y2="537.50" stroke="#dcdcdc" stroke-width="0.8" stroke-dasharray="2.9 1.2"/>
<g clip-path="url(#clip3)">
<path d="M60.5 583.5V583.5" stroke="#383838" stroke-width="1.0"/>
<path d="M57.5 583.5H63.5V583.5H57.5Z" fill="#9afc5f" stroke="#000" stroke-width="1.0"/>
<path d="M54.5 583.5H66.5V583.5H54.5Z" fill="#9afc5f" stroke="#000" stroke-width="1.0"/>
<path d="M54.5 583.5H66.5" stroke="#000" stroke-width="1.0"/>
<path d="M91.5 600.5V605.5" stroke="#383838" stroke-width="1.0"/>
<path d="M88.5 601.5H94.5V603.5H88.5Z" fill="#9afc5f" stroke="#000" stroke-width="1.0"/>
<path d="M85.5 602.5H97.5V603.5H85.5Z" fill="#9afc5f" stroke="#000" stroke-width="1.0"/>
<path d="M85.5 602.5H97.5" stroke="#000" stroke-width="1.0"/>
<path d="M122.5 602.5V606.5" stroke="#383838" stroke-width="1.0"/>
<path d="M119.5 604.5H125.5V606.5H119.5Z" fill="#9afc5f" stroke="#000" stroke-width="1.0"/>
<path d="M116.5 604.5H128.5V605.5H116.5Z" fill="#9afc5f" stroke="#000" stroke-width="1.0"/>
<path d="M116.5 605.5H128.5" stroke="#000" stroke-width="1.0"/>
<path d="M154.5 578.5V579.5" stroke="#383838" stroke-width="1.0"/>
<path d="M150.5 578.5H157.5V579.5H150.5Z" fill="#9afc5f" stroke="#000" stroke-width="1.0"/>
<path d="M147.5 578.5H160.5V579.5H147.5Z" fill="#9afc5f" stroke="#000" stroke-width="1.0"/>
<path d="M147.5 578.5H160.5" stroke="#000" stroke-width="1.0"/>
<path d="M185.5 558.5V564.5" stroke="#383838" stroke-width="1.0"/>
<path d="M182.5 559.5H188.5V563.5H182.5Z" fill="#9afc5f" stroke="#000" stroke-width="1.0"/>
<path d="M179.5 561.5H191.5V563.5H179.5Z" fill="#9afc5f" stroke="#000" stroke-width="1.0"/>
<path d="M179.5 562.5H191.5" stroke="#000" stroke-width="1.0"/>
<path d="M216.5 569.5V573.5" stroke="#383838" stroke-width="1.0"/>
<path d="M213.5 570.5H219.5V573.5H213.5Z" fill="#9afc5f" stroke="#000" stroke-width="1.0"/>
<path d="M210.5 571.5H222.5V572.5H210.5Z" fill="#9afc5f" stroke="#000" stroke-width="1.0"/>
<path d="M210.5 571.5H222.5" stroke="#000" stroke-width="1.0"/>
<path d="M247.5 574.5V577.5" stroke="#383838" stroke-width="1.0"/>
<path d="M244.5 575.5H250.5V576.5H244.5Z" fill="#9afc5f" stroke="#000" stroke-width="1.0"/>
<path d="M241.5 575.5H253.5V576.5H241.5Z" fill="#9afc5f" stroke="#000" stroke-width="1.0"/>
<path d="M241.5 575.5H253.5" stroke="#000" stroke-width="1.0"/>
<path d="M279.5 545.5V555.5" stroke="#383838" stroke-width="1.0"/>
<path d="M276.5 546.5H282.5V553.5H276.5Z" fill="#9afc5f" stroke="#000" stroke-width="1.0"/>
<path d="M273.5 547.5H285.5V552.5H273.5Z" fill="#9afc5f" stroke="#000" stroke-width="1.0"/>
<path d="M273.5 549.5H285.5" stroke="#000" stroke-width="1.0"/>
<path d="M310.5 528.5V540.5" stroke="#383838" stroke-width="1.0"/>
<path d="M307.5 530.5H313.5V536.5H307.5Z" fill="#9afc5f" stroke="#000" stroke-width="1.0"/>
<path d="M304.5 531.5H316.5V533.5H304.5Z" fill="#9afc5f" stroke="#000" stroke-width="1.0"/>
<path d="M304.5 532.5H316.5" stroke="#000" stroke-width="1.0"/>
<path d="M341.5 557.5V578.5" stroke="#383838" stroke-width="1.0"/>
<path d="M338.5 562.5H344.5V574.5H338.5Z" fill="#9afc5f" stroke="#000" stroke-width="1.0"/>
<path d="M335.5 564.5H347.5V572.5H335.5Z" fill="#9afc5f" stroke="#000" stroke-width="1.0"/>
<path d="M335.5 568.5H347.5" stroke="#000" stroke-width="1.0"/>
<path d="M372.5 568.5V590.5" stroke="#383838" stroke-width="1.0"/>
<path d="M369.5 572.5H376.5V586.5H369.5Z" fill="#9afc5f" stroke="#000" stroke-width="1.0"/>
<path d="M366.5 575.5H379.5V580.5H366.5Z" fill="#9afc5f" stroke="#000" stroke-width="1.0"/>
<path d="M366.5 577.5H379.5" stroke="#000" stroke-width="1.0"/>
<path d="M404.5 549.5V576.5" stroke="#383838" stroke-width="1.0"/>
<path d="M401.5 552.5H407.5V565.5H401.5Z" fill="#9afc5f" stroke="#000" stroke-width="1.0"/>
<path d="M398.5 553.5H410.5V562.5H398.5Z" fill="#9afc5f" stroke="#000" stroke-width="1.0"/>
<path d="M398.5 557.5H410.5" stroke="#000" stroke-width="1.0"/>
<path d="M435.5 525.5V562.5" stroke="#383838" stroke-width="1.0"/>
<path d="M432.5 539.5H438.5V559.5H432.5Z" fill="#9afc5f" stroke="#000" stroke-width="1.0"/>
<path d="M429.5 540.5H441.5V550.5H429.5Z" fill="#9afc5f" stroke="#000" stroke-width="1.0"/>
<path d="M429.5 543.5H441.5" stroke="#000" stroke-width="1.0"/>
<path d="M466.5 557.5V591.5" stroke="#383838" stroke-width="1.0"/>
<path d="M463.5 562.5H469.5V581.5H463.5Z" fill="#9afc5f" stroke="#000" stroke-width="1.0"/>
<path d="M460.5 565.5H472.5V578.5H460.5Z" fill="#9afc5f" stroke="#000" stroke-width="1.0"/>
<path d="M460.5 574.5H472.5" stroke="#000" stroke-width="1.0"/>
<path d="M497.5 565.5V609.5" stroke="#383838" stroke-width="1.0"/>
<path d="M494.5 573.5H501.5V604.5H494.5Z" fill="#9afc5f" stroke="#000" stroke-width="1.0"/>
<path d="M491.5 588.5H504.5V601.5H491.5Z" fill="#9afc5f" stroke="#000" stroke-width="1.0"/>
<path d="M491.5 595.5H504.5" stroke="#000" stroke-width="1.0"/>
<path d="M529.5 573.5V604.5" stroke="#383838" stroke-width="1.0"/>
<path d="M526.5 577.5H532.5V597.5H526.5Z" fill="#9afc5f" stroke="#000" stroke-width="1.0"/>
<path d="M523.5 581.5H535.5V594.5H523.5Z" fill="#9afc5f" stroke="#000" stroke-width="1.0"/>
<path d="M523.5 590.5H535.5" stroke="#000" stroke-width="1.0"/>
<path d="M560.5 547.5V595.5" stroke="#383838" stroke-width="1.0"/>
<path d="M557.5 549.5H563.5V581.5H557.5Z" fill="#9afc5f" stroke="#000" stroke-width="1.0"/>
<path d="M554.5 556.5H566.5V576.5H554.5Z" fill="#9afc5f" stroke="#000" stroke-width="1.0"/>
<path d="M554.5 567.5H566.5" stroke="#000" stroke-width="1.0"/>
<path d="M591.5 574.5V607.5" stroke="#383838" stroke-width="1.0"/>
<path d="M588.5 576.5H594.5V601.5H588.5Z" fill="#9afc5f" stroke="#000" stroke-width="1.0"/>
<path d="M585.5 581.5H597.5V595.5H585.5Z" fill="#9afc5f" stroke="#000" stroke-width="1.0"/>
<path d="M585.5 589.5H597.5" stroke="#000" stroke-width="1.0"/>
<path d="M622.5 581.5V623.5" stroke="#383838" stroke-width="1.0"/>
<path d="M619.5 585.5H626.5V615.5H619.5Z" fill="#9afc5f" stroke="#000" stroke-width="1.0"/>
<path d="M616.5 589.5H629.5V603.5H616.5Z" fill="#9afc5f" stroke="#000" stroke-width="1.0"/>
<path d="M616.5 595.5H629.5" stroke="#000" stroke-width="1.0"/>
<path d="M654.5 563.5V615.5" stroke="#383838" stroke-width="1.0"/>
<path d="M651.5 565.5H657.5V594.5H651.5Z" fill="#9afc5f" stroke="#000" stroke-width="1.0"/>
<path d="M648.5 569.5H660.5V587.5H648.5Z" fill="#9afc5f" stroke="#000" stroke-width="1.0"/>
<path d="M648.5 575.5H660.5" stroke="#000" stroke-width="1.0"/>
<path d="M685.5 536.5V607.5" stroke="#383838" stroke-width="1.0"/>
<path d="M682.5 543.5H688.5V576.5H682.5Z" fill="#9afc5f" stroke="#000" stroke-width="1.0"/>
<path d="M679.5 547.5H691.5V568.5H679.5Z" fill="#9afc5f" stroke="#000" stroke-width="1.0"/>
<path d="M679.5 555.5H691.5" stroke="#000" stroke-width="1.0"/>
<path d="M716.5 561.5V623.5" stroke="#383838" stroke-width="1.0"/>
<path d="M713.5 569.5H719.5V604.5H713.5Z" fill="#9afc5f" stroke="#000" stroke-width="1.0"/>
<path d="M710.5 572.5H722.5V593.5H710.5Z" fill="#9afc5f" stroke="#000" stroke-width="1.0"/>
<path d="M710.5 575.5H722.5" stroke="#000" stroke-width="1.0"/>
<path d="M748.5 576.5V631.5" stroke="#383838" stroke-width="1.0"/>
<path d="M744.5 580.5H751.5V608.5H744.5Z" fill="#9afc5f" stroke="#000" stroke-width="1.0"/>
<path d="M741.5 585.5H754.5V600.5H741.5Z" fill="#9afc5f" stroke="#000" stroke-width="1.0"/>
<path d="M741.5 589.5H754.5" stroke="#000" stroke-width="1.0"/>
<path d="M779.5 546.5V610.5" stroke="#383838" stroke-width="1.0"/>
<path d="M776.5 556.5H782.5V584.5H776.5Z" fill="#9afc5f" stroke="#000" stroke-width="1.0"/>
<path d="M773.5 567.5H785.5V579.5H773.5Z" fill="#9afc5f" stroke="#000" stroke-width="1.0"/>
<path d="M773.5 572.5H785.5" stroke="#000" stroke-width="1.0"/>
<path d="M810.5 531.5V588.5" stroke="#383838" stroke-width="1.0"/>
<path d="M807.5 542.5H813.5V567.5H807.5Z" fill="#9afc5f" stroke="#000" stroke-width="1.0"/>
<path d="M804.5 548.5H816.5V557.5H804.5Z" fill="#9afc5f" stroke="#000" stroke-width="1.0"/>
<path d="M804.5 554.5H816.5" stroke="#000" stroke-width="1.0"/>
<polyline points="59.80,583.57 91.06,602.68 122.32,605.33 153.58,578.81 184.84,562.28 216.10,571.87 247.36,575.93 278.62,549.64 309.88,532.41 341.14,569.46 372.40,577.69 403.66,550.94 434.92,539.41 466.18,573.52 497.44,599.15 528.70,590.98 559.96,562.75 591.22,585.51 622.48,592.04 653.74,572.81 685.00,550.47 716.26,570.75 747.52,582.81 778.78,557.58 810.04,542.65" fill="none" stroke="#ff0000" stroke-width="1.3" stroke-linejoin="round"/>
<polyline points="59.80,583.57 91.06,602.68 122.32,605.33 153.58,578.81 184.84,562.28 216.10,571.87 247.36,575.93 278.62,549.64 309.88,532.41 341.14,568.75 372.40,576.63 403.66,557.99 434.92,546.23 466.18,574.75 497.44,592.68 528.70,589.57 559.96,567.11 591.22,587.98 622.48,597.04 653.74,579.40 685.00,559.17 716.26,582.81 747.52,593.10 778.78,574.93 810.04,554.46" fill="none" stroke="#0000ff" stroke-width="1.3" stroke-linejoin="round"/>
</g>
<path d="M44.5 521.4H826.4V636.7H44.5Z" fill="none" stroke="#000" stroke-width="1.4"/>
<path d="M39.7 626.5H44.5" stroke="#000" stroke-width="1.4"/>
<text x="19.85" y="630.60" font-size="10.09" textLength="14.46" lengthAdjust="spacingAndGlyphs" fill="#000" stroke="#000" stroke-width="0.147">−5</text>
<path d="M39.7 596.5H44.5" stroke="#000" stroke-width="1.4"/>
<text x="28.06" y="601.10" font-size="10.09" textLength="6.26" lengthAdjust="spacingAndGlyphs" fill="#000" stroke="#000" stroke-width="0.147">0</text>
<path d="M39.7 567.5H44.5" stroke="#000" stroke-width="1.4"/>
<text x="28.06" y="571.60" font-size="10.09" textLength="6.26" lengthAdjust="spacingAndGlyphs" fill="#000" stroke="#000" stroke-width="0.147">5</text>
<path d="M39.7 537.5H44.5" stroke="#000" stroke-width="1.4"/>
<text x="21.83" y="542.10" font-size="10.09" textLength="12.47" lengthAdjust="spacingAndGlyphs" fill="#000" stroke="#000" stroke-width="0.147">10</text>
<path d="M60.5 636.7V641.5" stroke="#000" stroke-width="1.4"/>
<text x="49.57" y="654.80" font-size="10.76" textLength="20.46" lengthAdjust="spacingAndGlyphs" fill="#000" stroke="#000" stroke-width="0.157">12Z</text>
<text x="43.04" y="666.40" font-size="10.76" textLength="33.53" lengthAdjust="spacingAndGlyphs" fill="#000" stroke="#000" stroke-width="0.157">27Dec</text>
<path d="M185.5 636.7V641.5" stroke="#000" stroke-width="1.4"/>
<text x="174.61" y="654.80" font-size="10.76" textLength="20.46" lengthAdjust="spacingAndGlyphs" fill="#000" stroke="#000" stroke-width="0.157">12Z</text>
<text x="168.08" y="666.40" font-size="10.76" textLength="33.53" lengthAdjust="spacingAndGlyphs" fill="#000" stroke="#000" stroke-width="0.157">28Dec</text>
<path d="M310.5 636.7V641.5" stroke="#000" stroke-width="1.4"/>
<text x="299.65" y="654.80" font-size="10.76" textLength="20.46" lengthAdjust="spacingAndGlyphs" fill="#000" stroke="#000" stroke-width="0.157">12Z</text>
<text x="293.12" y="666.40" font-size="10.76" textLength="33.53" lengthAdjust="spacingAndGlyphs" fill="#000" stroke="#000" stroke-width="0.157">29Dec</text>
<path d="M435.5 636.7V641.5" stroke="#000" stroke-width="1.4"/>
<text x="424.69" y="654.80" font-size="10.76" textLength="20.46" lengthAdjust="spacingAndGlyphs" fill="#000" stroke="#000" stroke-width="0.157">12Z</text>
<text x="418.16" y="666.40" font-size="10.76" textLength="33.53" lengthAdjust="spacingAndGlyphs" fill="#000" stroke="#000" stroke-width="0.157">30Dec</text>
<path d="M560.5 636.7V641.5" stroke="#000" stroke-width="1.4"/>
<text x="549.73" y="654.80" font-size="10.76" textLength="20.46" lengthAdjust="spacingAndGlyphs" fill="#000" stroke="#000" stroke-width="0.157">12Z</text>
<text x="543.20" y="666.40" font-size="10.76" textLength="33.53" lengthAdjust="spacingAndGlyphs" fill="#000" stroke="#000" stroke-width="0.157">31Dec</text>
<path d="M685.5 636.7V641.5" stroke="#000" stroke-width="1.4"/>
<text x="674.77" y="654.80" font-size="10.76" textLength="20.46" lengthAdjust="spacingAndGlyphs" fill="#000" stroke="#000" stroke-width="0.157">12Z</text>
<text x="670.30" y="666.40" font-size="10.76" textLength="29.41" lengthAdjust="spacingAndGlyphs" fill="#000" stroke="#000" stroke-width="0.157">01Jan</text>
<path d="M810.5 636.7V641.5" stroke="#000" stroke-width="1.4"/>
<text x="799.81" y="654.80" font-size="10.76" textLength="20.46" lengthAdjust="spacingAndGlyphs" fill="#000" stroke="#000" stroke-width="0.157">12Z</text>
<text x="795.34" y="666.40" font-size="10.76" textLength="29.41" lengthAdjust="spacingAndGlyphs" fill="#000" stroke="#000" stroke-width="0.157">02Jan</text>
<text x="44.40" y="516.80" font-size="12.51" textLength="19.55" lengthAdjust="spacingAndGlyphs" fill="#000" stroke="#000" stroke-width="0.182">2m</text><text x="67.83" y="516.80" font-size="12.51" textLength="76.35" lengthAdjust="spacingAndGlyphs" fill="#000" stroke="#000" stroke-width="0.182">temperature</text><text x="148.06" y="516.80" font-size="12.51" textLength="23.12" lengthAdjust="spacingAndGlyphs" fill="#000" stroke="#000" stroke-width="0.182">(°C)</text>
</svg></body></html>
